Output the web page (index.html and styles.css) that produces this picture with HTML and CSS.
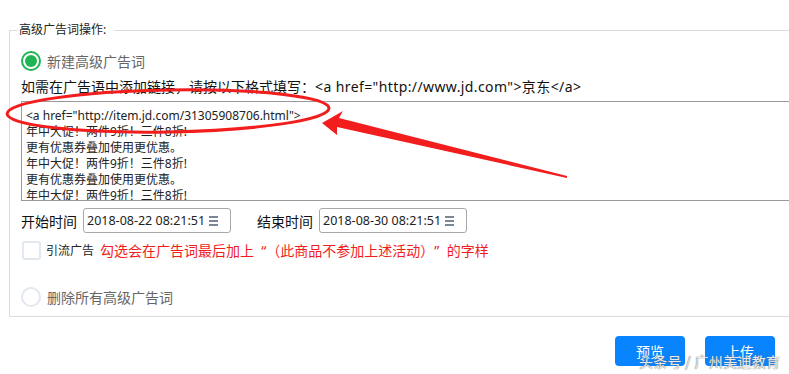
FILE: index.html
```html
<!DOCTYPE html>
<html lang="zh-CN">
<head>
  <meta charset="UTF-8">
  <title>高级广告词操作</title>
  <link rel="stylesheet" href="styles.css">
</head>
<body>
  <fieldset class="panel">
    <legend>高级广告词操作:</legend>

    <label class="option">
      <span class="radio checked"></span>
      <span class="option-text">新建高级广告词</span>
    </label>

    <div class="hint">如需在广告语中添加链接，请按以下格式填写：<span class="code">&lt;a href="http://www.jd.com"&gt;京东&lt;/a&gt;</span></div>

    <textarea class="ad-text" readonly>&lt;a href="http://item.jd.com/31305908706.html"&gt;
年中大促！两件9折！三件8折!
更有优惠券叠加使用更优惠。
年中大促！两件9折！三件8折!
更有优惠券叠加使用更优惠。
年中大促！两件9折！三件8折!</textarea>

    <div class="time-row">
      <span class="time-label">开始时间</span>
      <div class="date-input">
        <span>2018-08-22 08:21:51</span>
        <span class="menu-icon"><i></i><i></i><i></i></span>
      </div>
      <span class="time-label end">结束时间</span>
      <div class="date-input">
        <span>2018-08-30 08:21:51</span>
        <span class="menu-icon"><i></i><i></i><i></i></span>
      </div>
    </div>

    <label class="check-row">
      <span class="checkbox"></span>
      <span class="check-text">引流广告</span>
      <span class="warn">勾选会在广告词最后加上&nbsp; “（此商品不参加上述活动）”&nbsp; 的字样</span>
    </label>

    <label class="option delete">
      <span class="radio"></span>
      <span class="option-text">删除所有高级广告词</span>
    </label>
  </fieldset>

  <div class="actions">
    <button class="btn">预览</button>
    <button class="btn">上传</button>
  </div>

  <!-- annotation drawn over the screenshot -->
  <svg class="marks" width="789" height="374" viewBox="0 0 789 374">
    <ellipse cx="168" cy="111" rx="161" ry="21" fill="none" stroke="#f21d1d" stroke-width="3" transform="rotate(-1 168 111)"/>
    <polygon points="322,123 343,111 339,118 567,176 567,178 337,127 337,135" fill="#f21d1d"/>
  </svg>

  <div class="watermark">头条号 / 广州美迪教育</div>
</body>
</html>
```

FILE: styles.css
```css
/* General */
html, body {
  margin: 0;
  padding: 0;
  width: 789px;
  height: 374px;
  overflow: hidden;
  background: #fff;
  font-family: "Noto Sans", "Noto Sans CJK SC", sans-serif;
  color: #222;
  position: relative;
  text-spacing-trim: space-all; /* keep full-width punctuation */
}

/* Fieldset panel */
.panel {
  margin: 22px -20px 0 9px;
  padding: 0 0 9px 11px;
  border: 1px solid #dcdcdc;
  min-width: 0;
}
.panel legend {
  font-size: 12px;
  line-height: 16px;
  padding: 0 8px 0 2px;
  margin-left: -4px;
  color: #222;
}

/* Radio options */
.option {
  display: flex;
  align-items: center;
  gap: 6px;
  height: 20px;
  margin-top: 13px;
}
.option.delete {
  margin-top: 27px;
}
.option-text {
  font-size: 14px;
  color: #666;
}
.radio {
  width: 16px;
  height: 16px;
  border: 2px solid #e1e8ef;
  border-radius: 50%;
  position: relative;
  flex-shrink: 0;
}
.radio.checked {
  border-color: #1fb552;
}
.radio.checked::after {
  content: "";
  position: absolute;
  top: 2px;
  left: 2px;
  width: 12px;
  height: 12px;
  border-radius: 50%;
  background: #1fb552;
}

/* Hint line */
.hint {
  margin-top: 6px;
  font-size: 14px;
  line-height: 20px;
  color: #111;
}
.hint .code {
  letter-spacing: 0.4px;
}

/* Ad text area */
.ad-text {
  display: block;
  box-sizing: border-box;
  margin-top: 4px;
  width: 800px;
  height: 100px;
  padding: 6px 4px;
  border: 1px solid #9a9a9a;
  font-family: "Noto Sans", "Noto Sans CJK SC", sans-serif;
  font-size: 12px;
  line-height: 16px;
  color: #222;
  resize: none;
  overflow: hidden;
  outline: none;
}

/* Time pickers */
.time-row {
  display: flex;
  align-items: center;
  margin-top: 7px;
  height: 25px;
}
.time-label {
  font-size: 14px;
  color: #111;
  width: 62px;
}
.time-label.end {
  margin-left: 26px;
}
.date-input {
  box-sizing: border-box;
  display: flex;
  align-items: center;
  justify-content: space-between;
  width: 148px;
  height: 25px;
  padding: 0 12px 0 3px;
  border: 1px solid #a8a8a8;
  border-radius: 3px;
  font-size: 12.5px;
  color: #222;
}
.menu-icon {
  display: flex;
  flex-direction: column;
  gap: 2px;
  width: 9px;
}
.menu-icon i {
  display: block;
  height: 2px;
  background: #7c8796;
}

/* Checkbox row */
.check-row {
  display: flex;
  align-items: center;
  margin-top: 7px;
  height: 20px;
}
.checkbox {
  box-sizing: border-box;
  width: 19px;
  height: 19px;
  border: 2px solid #e2e8ef;
  border-radius: 3px;
  margin-left: 1px;
}
.check-text {
  font-size: 12px;
  color: #222;
  margin-left: 5px;
}
.warn {
  font-size: 14px;
  color: #f21c1c;
  margin-left: 6px;
}

/* Buttons */
.actions {
  display: flex;
  justify-content: flex-end;
  gap: 20px;
  margin: 19px 14px 0 0;
}
.btn {
  width: 70px;
  height: 30px;
  border: none;
  border-radius: 4px;
  background: #0884ff;
  color: #fff;
  font-size: 14px;
  font-family: "Noto Sans CJK SC", sans-serif;
  padding: 0;
}

/* Overlays */
.marks {
  position: absolute;
  left: 0;
  top: 0;
  pointer-events: none;
}
.watermark {
  position: absolute;
  left: 639px;
  top: 351px;
  font-size: 14px;
  line-height: 20px;
  letter-spacing: 0.3px;
  color: rgba(255, 255, 255, 0.85);
  text-shadow: 0 0 1px #777, 0 0 1px #777;
  font-family: "Noto Sans CJK SC", sans-serif;
}
```
